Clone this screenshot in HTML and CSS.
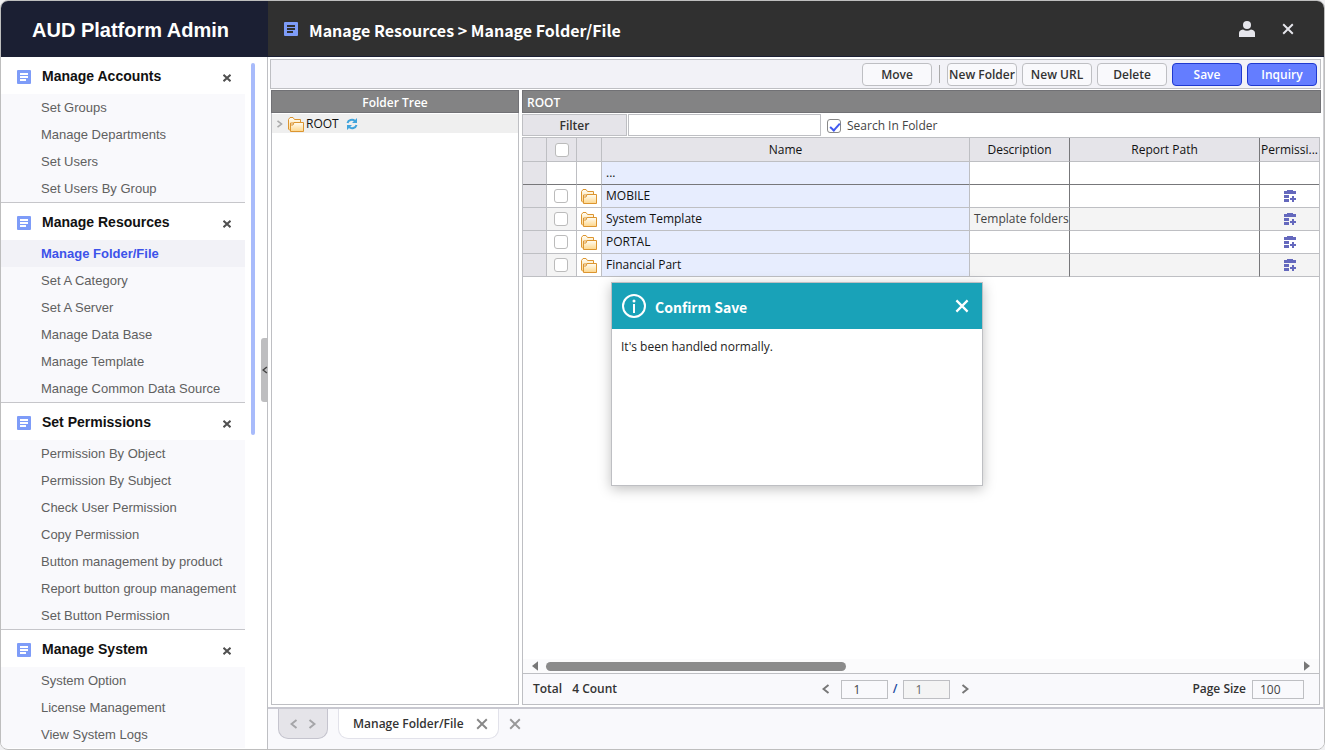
FILE: index.html
```html
<!DOCTYPE html>
<html lang="en">
<head>
<meta charset="utf-8">
<title>AUD Platform Admin</title>
<link rel="stylesheet" href="styles.css">
</head>
<body>
<svg class="sprite" width="0" height="0" aria-hidden="true">
  <defs>
    <linearGradient id="fg" x1="0" y1="0" x2="0" y2="1"><stop offset="0" stop-color="#fffdf5"/><stop offset="1" stop-color="#fdd68a"/></linearGradient>
    <symbol id="folder" viewBox="0 0 16 15"><path d="M2 13.500L.5 12V2.500L2 .5h3L6.500 2.500h6V6H2.500v8" fill="url(#fg)" stroke="#dc9530"/><path d="M2.500 14.500V8h2.500l1-2.500h9.500v9z" fill="url(#fg)" stroke="#dc9530"/></symbol>
    <symbol id="cross" viewBox="0 0 10 10"><path d="M1 1l8 8M9 1l-8 8" fill="none" stroke="currentColor" stroke-width="1.600"/></symbol>
    <symbol id="cross-bold" viewBox="0 0 8 8"><path d="M.5 .8l7 6.400M7.500 .8l-7 6.400" fill="none" stroke="currentColor" stroke-width="2"/></symbol>
    <symbol id="left" viewBox="0 0 8 10"><path d="M6.500 1l-5 4 5 4" fill="none" stroke="currentColor" stroke-width="2"/></symbol>
    <symbol id="right" viewBox="0 0 8 10"><path d="M1.500 1l5 4-5 4" fill="none" stroke="currentColor" stroke-width="2"/></symbol>
    <symbol id="perm" viewBox="0 0 12 12"><path d="M0 1h3V0h6v1h3v3H0zM0 5h5v3H0zM0 9h5v3H0zM8 6h2v2h2v2h-2v2H8v-2H6V8h2z" fill="#6468bd"/></symbol>
    <symbol id="doc" viewBox="0 0 14 14"><rect width="14" height="14" rx="1" fill="#7e9cf8"/><path d="M3 4h8M3 7h8M3 10h6" stroke="currentColor" stroke-width="2"/></symbol>
  </defs>
</svg>
<div class="window">
  <header class="brand"><h1>AUD Platform Admin</h1></header>
  <header class="topbar">
    <svg class="doc"><use href="#doc"/></svg>
    <h2>Manage Resources &gt; Manage Folder/File</h2>
    <button class="icon-btn" aria-label="User"><svg width="16" height="16" viewBox="0 0 16 16"><circle cx="8" cy="4" r="4" fill="#e6e6ec"/><path d="M0 16v-4q0-3 4-3.500q4 2.500 8 0q4 .5 4 3.500v4z" fill="#e6e6ec"/></svg></button>
    <button class="icon-btn" aria-label="Close"><svg width="12" height="12"><use href="#cross"/></svg></button>
  </header>
  <aside class="sidebar">
    <nav class="menu">
      <section>
        <h3><svg class="doc"><use href="#doc"/></svg>Manage Accounts<button aria-label="Collapse"><svg><use href="#cross-bold"/></svg></button></h3>
        <ul><li><a href="#">Set Groups</a></li><li><a href="#">Manage Departments</a></li><li><a href="#">Set Users</a></li><li><a href="#">Set Users By Group</a></li></ul>
      </section>
      <section>
        <h3><svg class="doc"><use href="#doc"/></svg>Manage Resources<button aria-label="Collapse"><svg><use href="#cross-bold"/></svg></button></h3>
        <ul><li><a href="#" class="active">Manage Folder/File</a></li><li><a href="#">Set A Category</a></li><li><a href="#">Set A Server</a></li><li><a href="#">Manage Data Base</a></li><li><a href="#">Manage Template</a></li><li><a href="#">Manage Common Data Source</a></li></ul>
      </section>
      <section>
        <h3><svg class="doc"><use href="#doc"/></svg>Set Permissions<button aria-label="Collapse"><svg><use href="#cross-bold"/></svg></button></h3>
        <ul><li><a href="#">Permission By Object</a></li><li><a href="#">Permission By Subject</a></li><li><a href="#">Check User Permission</a></li><li><a href="#">Copy Permission</a></li><li><a href="#">Button management by product</a></li><li><a href="#">Report button group management</a></li><li><a href="#">Set Button Permission</a></li></ul>
      </section>
      <section>
        <h3><svg class="doc"><use href="#doc"/></svg>Manage System<button aria-label="Collapse"><svg><use href="#cross-bold"/></svg></button></h3>
        <ul><li><a href="#">System Option</a></li><li><a href="#">License Management</a></li><li><a href="#">View System Logs</a></li></ul>
      </section>
    </nav>
    <div class="menu-scroll"></div>
    <button class="handle" aria-label="Hide menu"><svg width="6" height="8"><use href="#left"/></svg></button>
  </aside>
  <main class="main">
    <div class="content">
      <div class="toolbar">
        <button>Move</button><span class="sep"></span><button>New Folder</button><button>New URL</button><button>Delete</button><button class="primary">Save</button><button class="primary">Inquiry</button>
      </div>
      <div class="panels">
        <section class="tree">
          <h4>Folder Tree</h4>
          <div class="node"><svg class="caret"><use href="#right"/></svg><svg class="folder"><use href="#folder"/></svg><span>ROOT</span>
            <svg class="refresh" viewBox="0 0 12 12"><path d="M1.500 5A4.500 4 0 0 1 9 3M10.500 7A4.500 4 0 0 1 3 9" fill="none" stroke="#41a4dc" stroke-width="2"/><path d="M11 0v5H6zM1 12V7h5z" fill="#41a4dc"/></svg></div>
        </section>
        <section class="list">
          <h4>ROOT</h4>
          <div class="filter">
            <label class="filter-label" for="filter">Filter</label><input type="text" id="filter">
            <label class="check"><input type="checkbox" checked>Search In Folder</label>
          </div>
          <div class="grid">
            <table>
              <colgroup><col class="c-row"><col class="c-check"><col class="c-icon"><col><col class="c-desc"><col class="c-path"><col class="c-perm"></colgroup>
              <thead><tr><th></th><th><input type="checkbox" aria-label="Select all"></th><th></th><th>Name</th><th class="dark">Description</th><th class="dark">Report Path</th><th>Permissi...</th></tr></thead>
              <tbody>
                <tr class="up"><td></td><td></td><td></td><td>...</td><td></td><td></td><td></td></tr>
                <tr><td></td><td><input type="checkbox" aria-label="MOBILE"></td><td><svg class="folder"><use href="#folder"/></svg></td><td>MOBILE</td><td></td><td></td><td><svg class="perm"><use href="#perm"/></svg></td></tr>
                <tr class="alt"><td></td><td><input type="checkbox" aria-label="System Template"></td><td><svg class="folder"><use href="#folder"/></svg></td><td>System Template</td><td>Template folders</td><td></td><td><svg class="perm"><use href="#perm"/></svg></td></tr>
                <tr><td></td><td><input type="checkbox" aria-label="PORTAL"></td><td><svg class="folder"><use href="#folder"/></svg></td><td>PORTAL</td><td></td><td></td><td><svg class="perm"><use href="#perm"/></svg></td></tr>
                <tr class="alt"><td></td><td><input type="checkbox" aria-label="Financial Part"></td><td><svg class="folder"><use href="#folder"/></svg></td><td>Financial Part</td><td></td><td></td><td><svg class="perm"><use href="#perm"/></svg></td></tr>
              </tbody>
            </table>
            <div class="hscroll"><svg width="6" height="10" viewBox="0 0 5 8"><path d="M5 0v8L0 4z" fill="#777"/></svg><div class="track"><div class="thumb"></div></div><svg width="6" height="10" viewBox="0 0 5 8"><path d="M0 0v8l5-4z" fill="#777"/></svg></div>
            <div class="pager">
              <div class="total"><span>Total</span><span>4 Count</span></div>
              <div class="pages"><button aria-label="Previous page"><svg width="8" height="10"><use href="#left"/></svg></button><input type="text" value="1" aria-label="Page"><span>/</span><input type="text" value="1" class="readonly" readonly aria-label="Page count"><button aria-label="Next page"><svg width="8" height="10"><use href="#right"/></svg></button></div>
              <label class="size">Page Size<input type="text" value="100"></label>
            </div>
          </div>
        </section>
      </div>
    </div>
    <footer class="tabs">
      <div class="tab-nav"><button aria-label="Previous tab"><svg width="8" height="10"><use href="#left"/></svg></button><button aria-label="Next tab"><svg width="8" height="10"><use href="#right"/></svg></button></div>
      <div class="tab"><span>Manage Folder/File</span><button aria-label="Close tab"><svg width="12" height="12"><use href="#cross"/></svg></button></div>
      <button aria-label="Close all tabs"><svg width="12" height="12"><use href="#cross"/></svg></button>
    </footer>
  </main>
  <div class="dialog" role="dialog" aria-labelledby="dlg">
    <header>
      <svg width="24" height="24" viewBox="0 0 24 24"><circle cx="12" cy="12" r="11" fill="none" stroke="#fff" stroke-width="2"/><circle cx="12" cy="7" r="1.500" fill="#fff"/><path d="M12 10v9" stroke="#fff" stroke-width="2"/></svg>
      <h5 id="dlg">Confirm Save</h5>
      <button aria-label="Close dialog"><svg width="14" height="14"><use href="#cross"/></svg></button>
    </header>
    <p>It's been handled normally.</p>
  </div>
</div>
</body>
</html>
```
FILE: styles.css
```css
* { box-sizing: border-box; }
body { margin: 0; background: #f0f0f2; font: 12px/18px "Open Sans", "Noto Sans", sans-serif; color: #222; }
h1, h2, h3, h4, h5, p, ul { margin: 0; padding: 0; font-weight: bold; }
ul { list-style: none; }
a { color: inherit; text-decoration: none; }
button { font: inherit; color: inherit; background: none; border: 0; padding: 0; display: inline-flex; align-items: center; justify-content: center; }
input { font: inherit; color: #444; border: 1px solid #bebfc3; background: #fff; margin: 0; padding: 0 10px; min-width: 0; }
svg { display: block; flex: none; }
.sprite { position: absolute; }
.window { position: relative; height: 100vh; display: grid; grid-template: 56px minmax(0, 1fr) / 267px minmax(0, 1fr); border: 1px solid #bebebe; border-radius: 8px; overflow: hidden; background: #fff; }
.doc { width: 14px; height: 14px; color: #fff; }

.brand { background: #1b1f33; color: #fff; display: flex; align-items: center; padding: 2px 0 0 31px; font: bold 20px/24px "Liberation Sans", Arial, sans-serif; }
.brand h1 { font-size: 20px; white-space: nowrap; }
.topbar { background: #303030; border-bottom: 1px solid #1b1f33; color: #fff; display: flex; align-items: center; padding: 0 30px 0 16px; }
.topbar .doc { color: #303030; }
.topbar h2 { flex: 1; margin: 2px 0 0 11px; font: bold 16px/20px "Noto Sans CJK KR", "Noto Sans", sans-serif; }
.icon-btn { margin-left: 27px; color: #e6e6ec; }

.sidebar { position: relative; display: flex; min-height: 0; font: 13px/27px "Liberation Sans", Arial, sans-serif; }
.menu { width: 244px; overflow: hidden; }
.menu section + section { border-top: 1px solid #c6c6ca; }
.menu h3 { height: 37px; display: flex; align-items: center; padding: 2px 14px 0 16px; font-size: 14px; color: #111; }
.menu h3 .doc { margin-right: 11px; }
.menu h3 button { margin: 3px 0 0 auto; color: #505050; }
.menu h3 button svg { width: 8px; height: 8px; }
.menu ul { background: #f9f9fc; font-weight: normal; }
.menu a { display: block; height: 27px; padding-left: 40px; color: #606060; white-space: nowrap; }
.menu a.active { background: #f2f2f7; color: #3d52ea; font-weight: bold; }
.menu-scroll { width: 4px; height: 372px; margin: 6px 0 0 6px; border-radius: 2px; background: #a8bbfb; }
.handle { position: absolute; right: 0; top: 281px; width: 7px; height: 64px; background: #bebec0; border-radius: 3px 0 0 3px; color: #444; }

.main { display: flex; flex-direction: column; min-height: 0; min-width: 0; margin-left: -1px; border-left: 1px solid #bebfc3; background: #f9f9fc; }
.content { flex: 1; min-height: 0; display: flex; flex-direction: column; padding: 2px; background: #fff; border: 1px solid #d0d0d4; border-width: 0 1px 2px 0; border-bottom-color: #c8c8d0; }
.toolbar { height: 30px; display: flex; align-items: center; justify-content: flex-end; gap: 5px; padding: 0 3px; background: #f2f2f7; border: 1px solid #bebfc3; }
.toolbar button { width: 70px; height: 23px; padding-top: 2px; border: 1px solid #bebfc3; border-radius: 4px; background: #f9f9fc; font-weight: 600; color: #333; white-space: nowrap; }
.toolbar .primary { background: #647dff; border-color: #1f39cf; color: #fff; }
.sep { width: 1px; height: 18px; margin: 0 2px; background: #aaa; }
.panels { flex: 1; min-height: 0; display: flex; gap: 3px; padding: 1px 0 0 1px; }
h4 { height: 23px; background: #838384; border: 1px solid #717175; color: #fff; font-size: 12px; font-weight: 600; line-height: 23px; }
.tree { width: 248px; border: 1px solid #bebfc3; border-top: 0; }
.tree h4 { text-align: center; margin: 0 -1px 1px; }
.node { height: 19px; background: #efefef; display: flex; align-items: center; padding: 1px 0 0 4px; color: #111; }
.caret { width: 7px; height: 8px; color: #aaa; }
.folder { width: 16px; height: 15px; }
.node .folder { margin: 0 2px 0 5px; }
.refresh { width: 12px; height: 12px; margin-left: 7px; }
.list { flex: 1; min-width: 0; display: flex; flex-direction: column; }
.list h4 { padding-left: 4px; }
.filter { height: 24px; display: flex; align-items: center; gap: 1px; }
.filter-label { width: 105px; height: 22px; background: #e5e4e9; border: 1px solid #bebfc3; text-align: center; font-weight: 600; line-height: 22px; color: #333; }
.filter > input { width: 193px; height: 22px; }
.check { display: flex; align-items: center; gap: 6px; margin-left: 5px; padding-top: 1px; color: #444; }
input[type=checkbox] { appearance: none; width: 14px; height: 14px; padding: 0; border: 1px solid #bbb; border-radius: 3px; display: block; }
.check input:checked { border-color: #888; position: relative; }
.check input:checked::after { content: ""; position: absolute; left: 4px; top: 1px; width: 4px; height: 8px; border: solid #4059f0; border-width: 0 2px 2px 0; transform: rotate(42deg); }
.grid { flex: 1; min-height: 0; display: flex; flex-direction: column; border: 1px solid #bebfc3; margin-right: 1px; background: #fff; }
table { width: 100%; table-layout: fixed; border-collapse: separate; border-spacing: 0; }
.c-row { width: 24px; } .c-check { width: 30px; } .c-icon { width: 25px; }
.c-desc { width: 100px; } .c-path { width: 190px; } .c-perm { width: 59px; }
th, td { height: 23px; padding: 0 4px; border: solid #bebfc3; border-width: 0 1px 1px 0; line-height: 18px; font-weight: normal; white-space: nowrap; color: #111; }
th { height: 24px; background: #e5e4e9; }
th:last-child, td:last-child { border-right: 0; }
td:first-child { background: #e5e4e9; }
td:nth-child(4), tr.alt td:nth-child(4) { background: #e7edfe; }
td:nth-child(5) { color: #444; padding: 0 2px 0 4px; }
.dark, td:nth-child(5), td:nth-child(6) { border-right-color: #77777a; }
.up td { border-bottom-color: #77777a; }
.alt td:not(:first-child) { background: #f4f4f4; }
.alt td:nth-child(3) { background: #fff; }
td input[type=checkbox] { margin-left: 3px; }
th input[type=checkbox] { margin: 0 auto; }
th:last-child { padding: 0; }
.perm { width: 12px; height: 12px; margin: 0 auto; }
.hscroll { height: 14px; margin-top: auto; padding: 0 9px; display: flex; align-items: center; gap: 8px; background: #fbfbfc; }
.track { flex: 1; }
.thumb { width: 40%; height: 9px; border-radius: 5px; background: #8b8b8b; }
.pager { height: 31px; display: grid; grid-template-columns: 1fr auto 1fr; align-items: center; padding: 0 15px 0 10px; background: #f9f9fc; border-top: 1px solid #bebfc3; font-weight: 600; color: #333; }
.total, .pages, .size { display: flex; align-items: center; }
.total { gap: 10px; }
.pages { margin-right: 47px; }
.pages span { width: 15px; text-align: center; color: #1a48a0; }
.pages button { width: 8px; margin: 0 11px; color: #777; }
.pager input { width: 47px; height: 19px; font-weight: normal; background: #f9f9fc; padding: 0 12px; }
.pager .readonly { background: #f4f4f4; color: #666; }
.size { justify-self: end; gap: 6px; }
.pager .size input { width: 52px; padding: 0 7px; }
.tabs { height: 40px; display: flex; align-items: flex-start; padding-left: 10px; color: #888; }
.tab-nav, .tab { height: 30px; display: flex; align-items: center; border: 1px solid #c5c4ce; border-top: 0; border-radius: 0 0 10px 10px; }
.tab-nav { width: 50px; justify-content: center; gap: 10px; background: #e5e4e9; color: #a5a5a8; }
.tab { margin-left: 10px; width: 161px; padding: 0 10px 0 14px; justify-content: space-between; background: #fff; border-color: #e2e2ea; font-weight: 600; }
.tab span { color: #333; white-space: nowrap; }
.tabs > button { height: 29px; margin-left: 10px; color: #999; }

.dialog { position: absolute; left: 610px; top: 281px; width: 372px; height: 204px; background: #fff; border: 1px solid #bebfc3; box-shadow: 0 3px 12px rgba(0,0,0,.25); color: #222; }
.dialog header { height: 46px; display: flex; align-items: center; gap: 9px; padding: 0 13px 0 10px; background: #19a2b8; color: #fff; }
.dialog h5 { flex: 1; padding-top: 2px; font: bold 14px/20px "Noto Sans CJK KR", "Noto Sans", sans-serif; }
.dialog p { padding: 9px; font-weight: normal; }
```
